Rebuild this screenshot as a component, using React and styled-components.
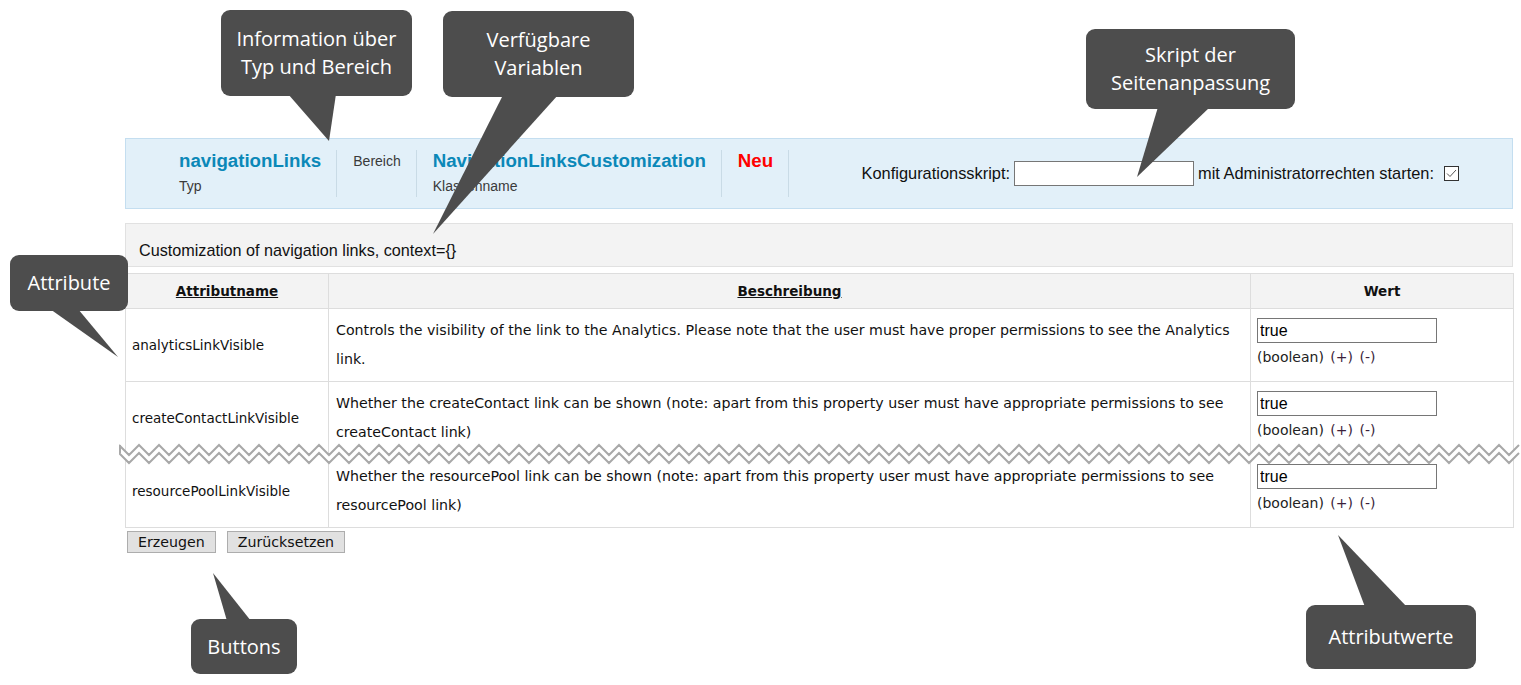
import React from 'react';
import styled, { createGlobalStyle } from 'styled-components';

const GlobalStyle = createGlobalStyle`
  html, body {
    margin: 0;
    padding: 0;
    background: #ffffff;
  }
  * {
    box-sizing: border-box;
  }
`;

const Page = styled.div`
  position: relative;
  width: 1521px;
  height: 685px;
  overflow: hidden;
  background: #ffffff;
`;

const Content = styled.div`
  width: 1513px;
  padding: 138px 0 0 125px;
`;

const InfoBar = styled.div`
  display: flex;
  align-items: flex-start;
  height: 71px;
  padding: 11px 53px 0 53px;
  background: #e2f0f9;
  border: 1px solid #c4def0;
  font-family: "Liberation Sans", Arial, sans-serif;
`;

const InfoBlock = styled.div`
  display: flex;
  flex-direction: column;
  height: 47px;
  padding: ${p => (p.$first ? '0 15px 0 0' : '0 15px 0 16px')};
  border-right: 1px solid #c9dbe6;
`;

const InfoTitle = styled.div`
  font-size: 18.7px;
  font-weight: bold;
  line-height: 22px;
  color: ${p => (p.$red ? '#ff0000' : '#0b88b8')};
  white-space: nowrap;
`;

const InfoLabel = styled.div`
  font-size: 14px;
  line-height: ${p => (p.$solo ? '22px' : '16px')};
  margin-top: ${p => (p.$solo ? '0' : '6px')};
  color: #3a3a3a;
  white-space: nowrap;
`;

const ScriptGroup = styled.div`
  display: flex;
  align-items: center;
  align-self: center;
  margin: -11px 0 0 auto;
  font-size: 16.4px;
  color: #111;
  white-space: nowrap;
`;

const ScriptInput = styled.input`
  width: 180px;
  height: 25px;
  margin: 0 4px;
  padding: 0 2px;
  border: 1px solid #767676;
  background: #ffffff;
  font-family: "Liberation Sans", Arial, sans-serif;
  font-size: 15px;
`;

const CheckBox = styled.span`
  display: inline-flex;
  align-items: center;
  justify-content: center;
  width: 15px;
  height: 15px;
  margin-left: 10px;
  border: 1px solid #333;
  background: #fff;
`;

const Description = styled.div`
  height: 44px;
  margin-top: 14px;
  padding: 18px 0 0 13px;
  background: #f3f3f3;
  border: 1px solid #e1e1e1;
  font-family: "Liberation Sans", Arial, sans-serif;
  font-size: 16.2px;
  line-height: 17px;
  color: #111;
`;

const AttrTable = styled.table`
  width: 1388px;
  margin-top: 6px;
  border-collapse: collapse;
  table-layout: fixed;
  font-family: "DejaVu Sans", Verdana, sans-serif;
  font-size: 13.5px;
  color: #111;
`;

const HeadCell = styled.th`
  height: 35px;
  padding: 0;
  background: #f3f3f3;
  border: 1px solid #dddddd;
  font-size: 13.5px;
  font-weight: bold;
  text-align: center;
  text-decoration: ${p => (p.$link ? 'underline' : 'none')};
`;

const Row = styled.tr`
  height: 73px;
`;

const Cell = styled.td`
  padding: 0 6px 0 ${p => (p.$wide ? 7 : 6)}px;
  border: 1px solid #dddddd;
  vertical-align: middle;
  font-size: ${p => (p.$wide ? '14.2px' : '13.5px')};
  line-height: 29px;
`;

const ValueInput = styled.input`
  display: block;
  width: 180px;
  height: 25px;
  padding: 0 2px;
  border: 1px solid #767676;
  font-family: "Liberation Sans", Arial, sans-serif;
  font-size: 16px;
  color: #000;
`;

const TypeHint = styled.div`
  font-size: 14px;
  line-height: 29px;
  word-spacing: 2px;
  color: #222;
`;

const HintLink = styled.span`
  color: #3b1f3b;
`;

const ButtonRow = styled.div`
  display: flex;
  gap: 11px;
  margin: 3px 0 0 2px;
`;

const Button = styled.button`
  height: 22px;
  padding: 0 10px;
  background: #e1e1e1;
  border: 1px solid #adadad;
  border-radius: 0;
  font-family: "DejaVu Sans", Tahoma, sans-serif;
  font-size: 14.2px;
  line-height: 20px;
  color: #111;
`;

const Overlay = styled.svg`
  position: absolute;
  left: 0;
  top: 0;
  pointer-events: none;
`;

const Bubble = styled.div`
  position: absolute;
  display: flex;
  align-items: center;
  justify-content: center;
  background: #4d4d4d;
  border-radius: 9px;
  color: #ffffff;
  font-family: "Open Sans", "Segoe UI", sans-serif;
  font-size: 20px;
  line-height: 28px;
  text-align: center;
  white-space: nowrap;
`;

const rows = [
  {
    name: 'analyticsLinkVisible',
    text: 'Controls the visibility of the link to the Analytics. Please note that the user must have proper permissions to see the Analytics link.',
  },
  {
    name: 'createContactLinkVisible',
    text: 'Whether the createContact link can be shown (note: apart from this property user must have appropriate permissions to see createContact link)',
  },
  {
    name: 'resourcePoolLinkVisible',
    text: 'Whether the resourcePool link can be shown (note: apart from this property user must have appropriate permissions to see resourcePool link)',
  },
];

const callouts = [
  { x: 221, y: 10, w: 191, h: 86, lines: ['Information über', 'Typ und Bereich'], tail: '288,94 336,94 329,141' },
  { x: 443, y: 11, w: 191, h: 86, lines: ['Verfügbare', 'Variablen'], tail: '503,95 558,95 433,234' },
  { x: 1086, y: 29, w: 209, h: 80, lines: ['Skript der', 'Seitenanpassung'], tail: '1158,107 1210,107 1137,177' },
  { x: 10, y: 255, w: 118, h: 56, lines: ['Attribute'], tail: '50,309 78,309 118,357' },
  { x: 191, y: 619, w: 106, h: 55, lines: ['Buttons'], tail: '227,621 251,621 213,573' },
  { x: 1306, y: 605, w: 170, h: 64, lines: ['Attributwerte'], tail: '1365,607 1407,607 1338,535' },
];

function zigzag(offset, count) {
  const pts = [];
  for (let i = 0; i <= count; i++) {
    pts.push([i * 10, (i % 2 === 0 ? 2 : 12) + offset]);
  }
  return pts;
}

function TornEdge() {
  const top = zigzag(0, 140);
  const bottom = zigzag(8, 140);
  const fill = [...top, ...bottom.slice().reverse()].map(p => p.join(',')).join(' ');
  const line = pts => pts.map(p => p.join(',')).join(' ');
  return (
    <Overlay width="1402" height="24" style={{ left: 119, top: 443 }}>
      <polygon points={fill} fill="#ffffff" />
      <polyline points={line(top)} fill="none" stroke="#a8a8a8" strokeWidth="2" />
      <polyline points={line(bottom)} fill="none" stroke="#a8a8a8" strokeWidth="2" />
      <line x1="1" y1="2" x2="1" y2="10" stroke="#a8a8a8" strokeWidth="2" />
    </Overlay>
  );
}

function Callouts() {
  return (
    <>
      <Overlay width="1521" height="685">
        {callouts.map(c => (
          <polygon key={c.tail} points={c.tail} fill="#4d4d4d" />
        ))}
      </Overlay>
      {callouts.map(c => (
        <Bubble key={c.lines[0]} style={{ left: c.x, top: c.y, width: c.w, height: c.h }}>
          <div>
            {c.lines.map(l => (
              <div key={l}>{l}</div>
            ))}
          </div>
        </Bubble>
      ))}
    </>
  );
}

export default function App() {
  return (
    <Page>
      <GlobalStyle />
      <Content>
        <InfoBar>
          <InfoBlock $first>
            <InfoTitle>navigationLinks</InfoTitle>
            <InfoLabel>Typ</InfoLabel>
          </InfoBlock>
          <InfoBlock>
            <InfoLabel $solo>Bereich</InfoLabel>
          </InfoBlock>
          <InfoBlock>
            <InfoTitle>NavigationLinksCustomization</InfoTitle>
            <InfoLabel>Klassenname</InfoLabel>
          </InfoBlock>
          <InfoBlock>
            <InfoTitle $red>Neu</InfoTitle>
          </InfoBlock>
          <ScriptGroup>
            Konfigurationsskript:
            <ScriptInput type="text" defaultValue="" />
            mit Administratorrechten starten:
            <CheckBox>
              <svg width="11" height="9" viewBox="0 0 11 9">
                <path d="M1 4.5 L4 7.5 L10 1" fill="none" stroke="#555" strokeWidth="1" />
              </svg>
            </CheckBox>
          </ScriptGroup>
        </InfoBar>

        <Description>Customization of navigation links, context={'{}'}</Description>

        <AttrTable>
          <colgroup>
            <col style={{ width: 203 }} />
            <col style={{ width: 922 }} />
            <col style={{ width: 263 }} />
          </colgroup>
          <thead>
            <tr>
              <HeadCell $link>Attributname</HeadCell>
              <HeadCell $link>Beschreibung</HeadCell>
              <HeadCell>Wert</HeadCell>
            </tr>
          </thead>
          <tbody>
            {rows.map(r => (
              <Row key={r.name}>
                <Cell>{r.name}</Cell>
                <Cell $wide>{r.text}</Cell>
                <Cell>
                  <ValueInput type="text" defaultValue="true" />
                  <TypeHint>
                    (boolean) <HintLink>(+)</HintLink> <HintLink>(-)</HintLink>
                  </TypeHint>
                </Cell>
              </Row>
            ))}
          </tbody>
        </AttrTable>

        <ButtonRow>
          <Button>Erzeugen</Button>
          <Button>Zurücksetzen</Button>
        </ButtonRow>
      </Content>
      <TornEdge />
      <Callouts />
    </Page>
  );
}
